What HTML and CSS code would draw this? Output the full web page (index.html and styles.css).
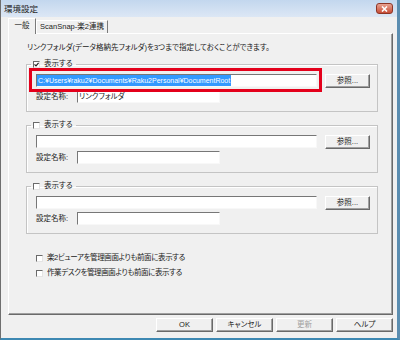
FILE: index.html
```html
<!DOCTYPE html>
<html lang="ja">

<head>
    <meta charset="UTF-8">
    <title>環境設定</title>
    <link rel="stylesheet" href="styles.css">
</head>

<body>
    <div class="window">
        <div class="titlebar">
            <span class="title">環境設定</span>
            <span class="close">
                <svg width="7" height="6" viewBox="0 0 7 6"><path d="M1 0.5 L6 5.5 M6 0.5 L1 5.5" stroke="#fff" stroke-width="1.6" /></svg>
            </span>
        </div>

        <div class="tabs">
            <div class="tab active">一般</div>
            <div class="tab">ScanSnap-楽2連携</div>
        </div>

        <div class="panel">
            <p class="intro">リンクフォルダ(データ格納先フォルダ)を3つまで指定しておくことができます。</p>

            <fieldset class="group">
                <legend><span class="cb checked"><svg width="5" height="5" viewBox="0 0 5 5"><path d="M0.5 2.3 L2 3.8 L4.6 0.8" fill="none" stroke="#222" stroke-width="1.2" /></svg></span>表示する</legend>
                <div class="row">
                    <div class="field path marked"><span class="sel">C:¥Users¥raku2¥Documents¥Raku2Personal¥DocumentRoot</span></div>
                    <button class="btn browse">参照...</button>
                </div>
                <div class="row name-row">
                    <label>設定名称:</label>
                    <div class="field name">リンクフォルダ</div>
                </div>
            </fieldset>

            <fieldset class="group">
                <legend><span class="cb"></span>表示する</legend>
                <div class="row">
                    <div class="field path"></div>
                    <button class="btn browse">参照...</button>
                </div>
                <div class="row name-row">
                    <label>設定名称:</label>
                    <div class="field name"></div>
                </div>
            </fieldset>

            <fieldset class="group">
                <legend><span class="cb"></span>表示する</legend>
                <div class="row">
                    <div class="field path"></div>
                    <button class="btn browse">参照...</button>
                </div>
                <div class="row name-row">
                    <label>設定名称:</label>
                    <div class="field name"></div>
                </div>
            </fieldset>

            <div class="options">
                <div class="opt"><span class="cb"></span>楽2ビューアを管理画面よりも前面に表示する</div>
                <div class="opt"><span class="cb"></span>作業デスクを管理画面よりも前面に表示する</div>
            </div>
        </div>

        <div class="footer">
            <button class="btn wide">OK</button>
            <button class="btn wide">キャンセル</button>
            <button class="btn wide disabled">更新</button>
            <button class="btn wide">ヘルプ</button>
        </div>
    </div>
</body>

</html>
```

FILE: styles.css
```css
* {
    box-sizing: border-box;
}

body {
    margin: 0;
    background-color: #f0f0f0;
    font-family: "Liberation Sans", "Noto Sans CJK JP", sans-serif;
    font-size: 7.5px;
    line-height: 10px;
    color: #222;
    font-feature-settings: "palt";
}

.window {
    width: 400px;
    height: 340px;
    display: flex;
    flex-direction: column;
    border-left: 1px solid #6f6f6f;
    border-right: 3px solid #5b8db0;
    border-bottom: 2px solid #3d88b2;
}

/* title bar */
.titlebar {
    height: 17px;
    flex: none;
    display: flex;
    align-items: center;
    justify-content: space-between;
    padding: 0 4px 0 3px;
    background: linear-gradient(#c3d7ee, #dce7f5);
}

.title {
    font-size: 8.5px;
}

.close {
    width: 17px;
    height: 11px;
    display: flex;
    align-items: center;
    justify-content: center;
    border: 1px solid #8e3526;
    border-radius: 3px;
    background: linear-gradient(#e8a393, #c84d36);
}

/* tabs */
.tabs {
    height: 16px;
    flex: none;
    display: flex;
    align-items: flex-end;
    padding-left: 7px;
}

.tab {
    height: 13px;
    width: 72px;
    text-align: center;
    line-height: 12px;
    border: 1px solid;
    border-color: #fff #7a7a7a transparent #fff;
    border-bottom: none;
}

.tab.active {
    width: 28px;
    height: 16px;
    margin-bottom: -1px;
    line-height: 14px;
    position: relative;
    z-index: 1;
    background-color: #f0f0f0;
}

/* tab page */
.panel {
    height: 282px;
    flex: none;
    margin: 0 4px 0 7px;
    padding: 9px 14px 0 17px;
    border: 1px solid;
    border-color: #fff #6a6a6a #6a6a6a #fff;
    box-shadow: inset -1px -1px #a0a0a0;
}

.intro {
    margin: 0 0 6px 1px;
}

.group {
    margin: 0 0 8px;
    padding: 0 7px 8px 0;
    min-width: 0;
    border: 1px solid #c4c4c4;
    box-shadow: inset 1px 1px #fff;
}

.group legend {
    display: flex;
    align-items: center;
    gap: 4px;
    margin-left: 4px;
    padding: 0 3px 0 2px;
    line-height: 10px;
}

.row {
    display: flex;
    gap: 8px;
    margin-left: 9px;
    height: 14px;
    margin-top: 5px;
}

.row.name-row {
    height: 13px;
    margin-top: 2px;
    gap: 0;
    align-items: center;
}

.row label {
    width: 41px;
}

.field {
    height: 13px;
    line-height: 11px;
    background-color: #fff;
    border: 1px solid;
    border-color: #777 #f8f8f8 #f8f8f8 #777;
    white-space: nowrap;
    overflow: visible;
    padding-left: 1px;
}

.field.path {
    width: 281px;
    padding-left: 0;
}

.field.name {
    width: 143px;
}

.sel {
    display: inline-block;
    background-color: #3399ff;
    color: #fff;
    padding: 0 1px;
    font-size: 7px;
    line-height: 11px;
}

/* red annotation frame over the first path */
.field.marked {
    position: relative;
}

.field.marked::after {
    content: "";
    position: absolute;
    left: -8px;
    right: -6px;
    top: -7px;
    bottom: -6px;
    border: 3px solid #e4001b;
}

/* checkboxes */
.cb {
    width: 7px;
    height: 7px;
    flex: none;
    display: inline-flex;
    align-items: center;
    justify-content: center;
    background-color: #fff;
    border: 1px solid;
    border-color: #6a6a6a #e4e4e4 #e4e4e4 #6a6a6a;
}

.options {
    margin-top: 19px;
    padding-left: 10px;
    display: flex;
    flex-direction: column;
    gap: 5px;
}

.opt {
    display: flex;
    align-items: center;
    gap: 4px;
    letter-spacing: -0.4px;
}

/* buttons */
.btn {
    font: inherit;
    color: inherit;
    padding: 0;
    line-height: 12px;
    background-color: #f0f0f0;
    border: 1px solid;
    border-color: #fff #696969 #696969 #fff;
    box-shadow: inset -1px -1px #a0a0a0;
}

.btn.browse {
    width: 45px;
    height: 14px;
}

.btn.wide {
    width: 57px;
    height: 14px;
}

.btn.disabled {
    color: #a0a0a0;
}

.footer {
    flex: 1;
    display: flex;
    justify-content: flex-end;
    align-items: flex-start;
    gap: 3px;
    padding: 3px 4px 0 0;
}
```
